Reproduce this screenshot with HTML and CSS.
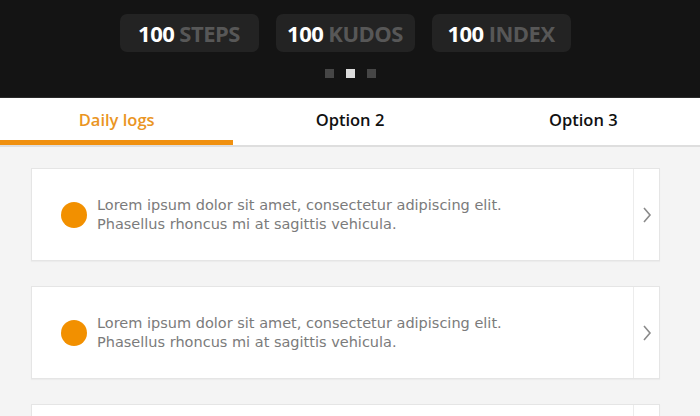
FILE: index.html
```html
<!DOCTYPE html>
<html>
<head>
<meta charset="utf-8">
<link rel="stylesheet" href="styles.css">
</head>
<body>
<header class="hero">
  <div class="stats">
    <div class="stat"><span class="num">100</span> <span class="label">STEPS</span></div>
    <div class="stat"><span class="num">100</span> <span class="label">KUDOS</span></div>
    <div class="stat"><span class="num">100</span> <span class="label">INDEX</span></div>
  </div>
  <div class="dots">
    <span class="dot"></span><span class="dot active"></span><span class="dot"></span>
  </div>
</header>
<nav class="tabs">
  <div class="tab active">Daily logs</div>
  <div class="tab">Option 2</div>
  <div class="tab">Option 3</div>
</nav>
<main class="list">
  <div class="card">
    <div class="card-main">
      <span class="bullet"></span>
      <p class="text">Lorem ipsum dolor sit amet, consectetur adipiscing elit.<br>Phasellus rhoncus mi at sagittis vehicula.</p>
    </div>
    <div class="card-arrow"><svg width="10" height="18" viewBox="0 0 10 18"><path d="M2 2 L8 9 L2 16" fill="none" stroke="#8a8a8a" stroke-width="1.6"/></svg></div>
  </div>
  <div class="card">
    <div class="card-main">
      <span class="bullet"></span>
      <p class="text">Lorem ipsum dolor sit amet, consectetur adipiscing elit.<br>Phasellus rhoncus mi at sagittis vehicula.</p>
    </div>
    <div class="card-arrow"><svg width="10" height="18" viewBox="0 0 10 18"><path d="M2 2 L8 9 L2 16" fill="none" stroke="#8a8a8a" stroke-width="1.6"/></svg></div>
  </div>
  <div class="card">
    <div class="card-main"></div>
    <div class="card-arrow"></div>
  </div>
</main>
</body>
</html>
```
FILE: styles.css
```css
* { box-sizing: border-box; }
html, body { margin: 0; padding: 0; }
body {
  background: #f4f4f4;
  font-family: "Open Sans", "Liberation Sans", sans-serif;
  overflow: hidden;
  height: 416px;
}
.hero {
  background: #141414;
  height: 98px;
  padding-top: 14px;
  border-bottom: 1px solid #2a2a2a;
}
.stats {
  display: flex;
  justify-content: center;
  gap: 17px;
  padding-right: 10px;
}
.stat {
  width: 139px;
  height: 38px;
  background: #232323;
  border-radius: 7px;
  display: flex;
  align-items: center;
  justify-content: center;
  gap: 5px;
  font-weight: 700;
  font-size: 22px;
  letter-spacing: -0.5px;
}
.num { color: #ffffff; }
.label { color: #575757; }
.dots {
  display: flex;
  justify-content: center;
  gap: 12px;
  margin-top: 17px;
}
.dot {
  width: 9px;
  height: 9px;
  background: #464646;
}
.dot.active { background: #dcdcdc; }
.tabs {
  display: flex;
  background: #ffffff;
  height: 49px;
  border-bottom: 2px solid #dedede;
}
.tab {
  flex: 1;
  text-align: center;
  font-size: 16.5px;
  line-height: 20px;
  font-weight: 600;
  color: #111;
  padding-top: 12px;
}
.tab.active {
  color: #ea9523;
  border-bottom: 5px solid #f0900f;
}
.list {
  padding: 21px 40px 0 31px;
  display: flex;
  flex-direction: column;
  gap: 25px;
}
.card {
  display: flex;
  height: 93px;
  flex: none;
  background: #ffffff;
  border: 1px solid #e5e5e5;
  box-shadow: 0 1px 1px rgba(0,0,0,0.03);
}
.card-main {
  flex: 1;
  display: flex;
  align-items: center;
  padding-left: 29px;
  gap: 10px;
}
.bullet {
  width: 26px;
  height: 26px;
  border-radius: 50%;
  background: #f29000;
  flex: none;
}
.text {
  margin: 0;
  font-family: "DejaVu Sans", sans-serif;
  font-size: 14.5px;
  line-height: 19px;
  color: #7b7b7b;
}
.card-arrow {
  width: 26px;
  border-left: 1px solid #ececec;
  display: flex;
  align-items: center;
  justify-content: center;
}
```
